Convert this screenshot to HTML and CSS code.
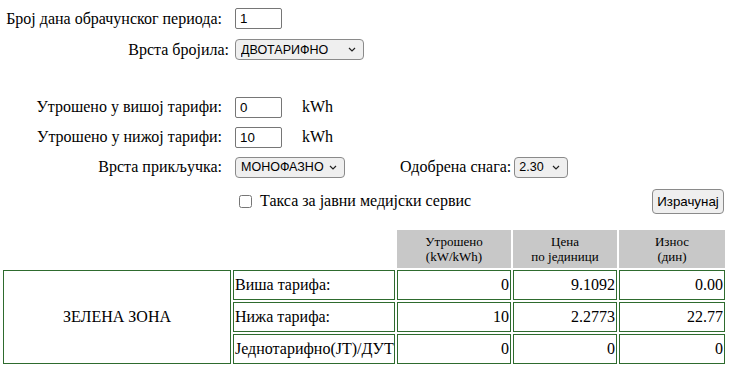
FILE: index.html
```html
<!DOCTYPE html>
<html lang="sr">
<head>
    <meta charset="UTF-8">
    <meta name="viewport" content="width=device-width, initial-scale=1.0">
    <title>Обрачун електричне енергије</title>
    <link rel="stylesheet" href="styles.css">
</head>
<body>

    <form class="calc">
        <div class="row row-first">
            <label class="lbl" for="days">Број дана обрачунског периода:</label>
            <input class="num" type="text" id="days" value="1">
        </div>
        <div class="row row-meter">
            <label class="lbl lbl-wide" for="meter">Врста бројила:</label>
            <select class="sel sel-meter" id="meter">
                <option>ДВОТАРИФНО</option>
                <option>ЈЕДНОТАРИФНО</option>
            </select>
        </div>

        <div class="row row-high">
            <label class="lbl" for="high">Утрошено у вишој тарифи:</label>
            <input class="num" type="text" id="high" value="0">
            <span class="unit">kWh</span>
        </div>
        <div class="row">
            <label class="lbl" for="low">Утрошено у нижој тарифи:</label>
            <input class="num" type="text" id="low" value="10">
            <span class="unit">kWh</span>
        </div>
        <div class="row">
            <label class="lbl" for="phase">Врста прикључка:</label>
            <select class="sel sel-phase" id="phase">
                <option>МОНОФАЗНО</option>
                <option>ТРОФАЗНО</option>
            </select>
            <label class="power-lbl" for="power">Одобрена снага:</label>
            <select class="sel sel-power" id="power">
                <option>2.30</option>
                <option>3.45</option>
                <option>5.75</option>
            </select>
        </div>
        <div class="row row-tax">
            <input class="chk" type="checkbox" id="tax">
            <label class="tax-lbl" for="tax">Такса за јавни медијски сервис</label>
            <button type="button" class="calc-btn">Израчунај</button>
        </div>
    </form>

    <table class="result">
        <thead>
            <tr>
                <th class="blank zone-col"></th>
                <th class="blank name-col"></th>
                <th class="head col-used">Утрошено<br>(kW/kWh)</th>
                <th class="head col-price">Цена<br>по јединици</th>
                <th class="head col-sum">Износ<br>(дин)</th>
            </tr>
        </thead>
        <tbody>
            <tr>
                <td class="zone" rowspan="3">ЗЕЛЕНА ЗОНА</td>
                <td>Виша тарифа:</td>
                <td class="val">0</td>
                <td class="val">9.1092</td>
                <td class="val">0.00</td>
            </tr>
            <tr>
                <td>Нижа тарифа:</td>
                <td class="val">10</td>
                <td class="val">2.2773</td>
                <td class="val">22.77</td>
            </tr>
            <tr>
                <td>Једнотарифно(ЈТ)/ДУТ</td>
                <td class="val">0</td>
                <td class="val">0</td>
                <td class="val">0</td>
            </tr>
        </tbody>
    </table>

</body>
</html>
```

FILE: styles.css
```css
body {
    margin: 0;
    font-family: "Liberation Serif", "Times New Roman", serif;
    font-size: 16px;
    color: #000;
    background: #fff;
}

/* form rows */
.calc {
    width: 726px;
}

.row {
    display: flex;
    align-items: center;
    height: 30px;
}

.row-first {
    margin-top: 3px;
    height: 31px;
}

.row-meter {
    height: 31px;
}

.row-high {
    margin-top: 27px;
}

.row-tax {
    height: 38px;
}

.lbl {
    width: 222px;
    text-align: right;
    margin-right: 13px;
    flex-shrink: 0;
}

.lbl-wide {
    width: 229px;
    margin-right: 6px;
}

.num {
    width: 47px;
    height: 21px;
    box-sizing: border-box;
    border: 1px solid #767676;
    border-radius: 2px;
    padding: 1px 4px;
    font-family: "Liberation Sans", Arial, sans-serif;
    font-size: 13.33px;
    color: #000;
    background: #fff;
}

.unit {
    margin-left: 20px;
}

.sel {
    -webkit-appearance: none;
    appearance: none;
    height: 21px;
    box-sizing: border-box;
    border: 1px solid #8a8a8a;
    border-radius: 4px;
    background: #efefef url("data:image/svg+xml,%3Csvg xmlns='http://www.w3.org/2000/svg' width='8' height='5' viewBox='0 0 8 5'%3E%3Cpath d='M1 1l3 3 3-3' fill='none' stroke='%23222' stroke-width='1.2'/%3E%3C/svg%3E") no-repeat right 7px center;
    font-family: "Liberation Sans", Arial, sans-serif;
    font-size: 12.5px;
    color: #000;
    padding: 0 18px 0 5px;
}

.sel-meter {
    width: 129px;
}

.sel-phase {
    width: 110px;
}

.sel-power {
    width: 54px;
    padding-left: 4px;
}

.power-lbl {
    margin-left: 55px;
    margin-right: 3px;
}

.chk {
    width: 13px;
    height: 13px;
    margin: 0 8px 0 239px;
}

.tax-lbl {
    flex: 1;
}

.calc-btn {
    width: 72px;
    height: 25px;
    box-sizing: border-box;
    border: 1px solid #8a8a8a;
    border-radius: 4px;
    background: #efefef;
    font-family: "Liberation Sans", Arial, sans-serif;
    font-size: 13.33px;
    color: #000;
    padding: 0;
    margin-right: 2px;
}

/* result table */
.result {
    table-layout: fixed;
    width: 726px;
    border-collapse: separate;
    border-spacing: 2px;
    margin: 8px 0 0 1px;
}

.result th {
    box-sizing: border-box;
}

.result th.blank {
    padding: 0;
}

.zone-col {
    width: 228px;
}

.name-col {
    width: 162px;
}

.head {
    background: #c8c8c8;
    border: 1px solid #c8c8c8;
    font-family: "Liberation Serif", "Times New Roman", serif;
    font-weight: normal;
    font-size: 13px;
    line-height: 15px;
    height: 38px;
    padding: 0;
    vertical-align: middle;
}

.col-used {
    width: 114px;
}

.col-price {
    width: 104px;
}

.col-sum {
    width: 106px;
}

.result td {
    border: 1px solid #2e6b2e;
    height: 28px;
    padding: 0 1px;
    white-space: nowrap;
}

.result .val {
    text-align: right;
}

.result .zone {
    text-align: center;
}
```
